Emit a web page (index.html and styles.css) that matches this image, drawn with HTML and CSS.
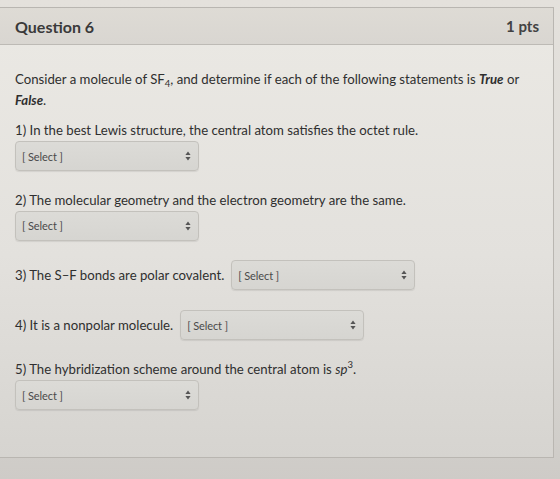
FILE: index.html
```html
<!DOCTYPE html>
<html lang="en">
<head>
<meta charset="utf-8">
<title>Question 6</title>
<link rel="stylesheet" href="styles.css">
</head>
<body>
<div class="page">
  <section class="quiz-card">
    <header class="quiz-head">
      <h2 class="quiz-title">Question 6</h2>
      <span class="quiz-points">1 pts</span>
    </header>
    <div class="quiz-body">
      <p class="prompt">Consider a molecule of SF<sub>4</sub>, and determine if each of the following statements is <b><i>True</i></b> or <b><i>False</i></b>.</p>

      <div class="item stacked">
        <p class="stmt">1) In the best Lewis structure, the central atom satisfies the octet rule.</p>
        <div class="picker"><span class="picker-label">[ Select ]</span><svg class="picker-arrow" width="6" height="10" viewBox="0 0 6 10"><path d="M3 0.5 L5.6 4 H0.4 Z M3 9.5 L5.6 6 H0.4 Z" fill="#555"/></svg></div>
      </div>

      <div class="item stacked">
        <p class="stmt">2) The molecular geometry and the electron geometry are the same.</p>
        <div class="picker"><span class="picker-label">[ Select ]</span><svg class="picker-arrow" width="6" height="10" viewBox="0 0 6 10"><path d="M3 0.5 L5.6 4 H0.4 Z M3 9.5 L5.6 6 H0.4 Z" fill="#555"/></svg></div>
      </div>

      <div class="item inline">
        <p class="stmt">3) The S&#8211;F bonds are polar covalent.</p>
        <div class="picker"><span class="picker-label">[ Select ]</span><svg class="picker-arrow" width="6" height="10" viewBox="0 0 6 10"><path d="M3 0.5 L5.6 4 H0.4 Z M3 9.5 L5.6 6 H0.4 Z" fill="#555"/></svg></div>
      </div>

      <div class="item inline">
        <p class="stmt">4) It is a nonpolar molecule.</p>
        <div class="picker"><span class="picker-label">[ Select ]</span><svg class="picker-arrow" width="6" height="10" viewBox="0 0 6 10"><path d="M3 0.5 L5.6 4 H0.4 Z M3 9.5 L5.6 6 H0.4 Z" fill="#555"/></svg></div>
      </div>

      <div class="item stacked">
        <p class="stmt">5) The hybridization scheme around the central atom is <i>sp</i><sup>3</sup>.</p>
        <div class="picker"><span class="picker-label">[ Select ]</span><svg class="picker-arrow" width="6" height="10" viewBox="0 0 6 10"><path d="M3 0.5 L5.6 4 H0.4 Z M3 9.5 L5.6 6 H0.4 Z" fill="#555"/></svg></div>
      </div>
    </div>
  </section>
</div>
</body>
</html>
```

FILE: styles.css
```css
html, body {
  margin: 0;
  padding: 0;
}

body {
  width: 560px;
  height: 479px;
  overflow: hidden;
  font-family: Lato, "Open Sans", sans-serif;
  color: #2f2f2f;
  background: linear-gradient(180deg, #e4e1dc 0%, #dcdad6 60%, #cecbc7 100%);
}

.page {
  padding-top: 7px;
}

.quiz-card {
  width: 553px;
  border: 1px solid #b9b6b1;
  border-left: none;
  background: linear-gradient(180deg, #ebe9e4 0%, #e3e1dd 55%, #d6d4d0 100%);
}

.quiz-head {
  height: 36px;
  display: flex;
  align-items: center;
  justify-content: space-between;
  padding: 0 14px 0 15px;
  background: linear-gradient(180deg, #dedbd5, #d9d6d1);
  border-bottom: 1px solid #bdbab5;
}

.quiz-title {
  margin: 0;
  font-size: 16px;
  font-weight: 700;
  color: #3a3a3a;
}

.quiz-points {
  font-size: 15px;
  font-weight: 700;
  color: #424242;
}

.quiz-body {
  padding: 24px 15px 47px 15px;
  font-size: 13.2px;
  line-height: 21px;
}

.prompt {
  margin: 0 0 9px 0;
}

.prompt sub {
  font-size: 9.5px;
  line-height: 0;
  vertical-align: -3px;
}

.stmt {
  margin: 0;
}

.stmt sup {
  font-size: 9.5px;
  line-height: 0;
  vertical-align: 6px;
}

.item + .item {
  margin-top: 18.5px;
}

.item.inline {
  display: flex;
  align-items: center;
  gap: 7px;
  height: 30px;
}

.item.stacked + .item.inline,
.item.inline + .item.inline {
  margin-top: 20px;
}

.picker {
  box-sizing: border-box;
  width: 184px;
  height: 30px;
  display: flex;
  align-items: center;
  justify-content: space-between;
  padding: 0 7px 0 6px;
  border: 1px solid #c3c1bc;
  border-radius: 4px;
  background: linear-gradient(180deg, #dcdbd7, #d6d5d1);
  box-shadow: 0 1px 1px rgba(0, 0, 0, 0.08);
}

.item.inline .picker {
  margin-top: -1px;
}

.picker-label {
  font-size: 11px;
  color: #4a4a4a;
  letter-spacing: -0.1px;
}

.picker-arrow {
  display: block;
}
```
